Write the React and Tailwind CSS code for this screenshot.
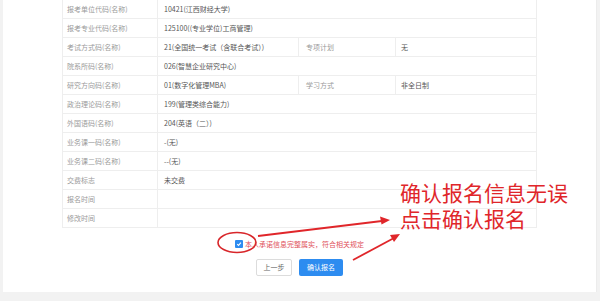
import React from 'react';

const rows = [
  { label: '报考单位代码(名称)', value: '10421(江西财经大学)' },
  { label: '报考专业代码(名称)', value: '125100((专业学位)工商管理)' },
  { label: '考试方式码(名称)', value: '21(全国统一考试（含联合考试）)', label2: '专项计划', value2: '无' },
  { label: '院系所码(名称)', value: '026(智慧企业研究中心)' },
  { label: '研究方向码(名称)', value: '01(数字化管理MBA)', label2: '学习方式', value2: '非全日制' },
  { label: '政治理论码(名称)', value: '199(管理类综合能力)' },
  { label: '外国语码(名称)', value: '204(英语（二）)' },
  { label: '业务课一码(名称)', value: '-(无)' },
  { label: '业务课二码(名称)', value: '--(无)' },
  { label: '交费标志', value: '未交费' },
  { label: '报名时间', value: '' },
  { label: '修改时间', value: '' },
];

const App = () => {
  return (
    <div
      className="relative w-[600px] h-[301px] overflow-hidden bg-[#f2f2f2] text-[7px]"
      style={{ fontFamily: '"Noto Sans CJK SC", "Noto Sans", sans-serif' }}
    >
      <div className="ml-[3px] w-[594px] h-[292px] bg-white border-r border-[#ececec] flex flex-col">
        {/* info table */}
        <div className="ml-[59px] w-[475px] border-l border-r border-[#eeeeee]">
          {rows.map((row, i) => (
            <div key={i} className="flex h-[19px] border-b border-[#eeeeee] items-center">
              <div className="w-[95px] h-full flex items-center pl-[4px] text-[#9a9a9a] border-r border-[#eeeeee]">
                {row.label}
              </div>
              {row.label2 ? (
                <>
                  <div className="w-[141px] h-full flex items-center pl-[6px] text-[#555] border-r border-[#eeeeee]">
                    {row.value}
                  </div>
                  <div className="w-[97px] h-full flex items-center pl-[7px] text-[#9a9a9a] border-r border-[#eeeeee]">
                    {row.label2}
                  </div>
                  <div className="flex-1 h-full flex items-center pl-[5px] text-[#555]">{row.value2}</div>
                </>
              ) : (
                <div className="flex-1 h-full flex items-center pl-[6px] text-[#555]">{row.value}</div>
              )}
            </div>
          ))}
        </div>

        {/* agreement */}
        <div className="ml-[59px] w-[475px] flex justify-center items-center mt-[11px] gap-[2px]">
          <span className="w-[8px] h-[8px] rounded-[1px] bg-[#2d8cf0] flex items-center justify-center">
            <svg width="6" height="6" viewBox="0 0 10 10">
              <path d="M2 5.2 L4.2 7.4 L8.2 2.8" stroke="white" strokeWidth="1.8" fill="none" />
            </svg>
          </span>
          <span className="text-[#e0505a]">本人承诺信息完整属实，符合相关规定</span>
        </div>

        {/* buttons */}
        <div className="ml-[59px] w-[475px] flex justify-center mt-[9px] gap-[7px]">
          <button className="w-[36px] h-[17px] border border-[#dcdcdc] rounded-[2px] bg-white text-[#666] text-[7px]">
            上一步
          </button>
          <button className="w-[44px] h-[17px] rounded-[2px] bg-[#2d8cf0] text-white text-[7px]">
            确认报名
          </button>
        </div>
      </div>

      {/* annotation */}
      <div className="absolute left-[400px] top-[179px] text-[21px] leading-[26px] text-[#e0262a]">
        <div>确认报名信息无误</div>
        <div>点击确认报名</div>
      </div>
      <svg className="absolute left-0 top-0" width="600" height="301" viewBox="0 0 600 301">
        <ellipse cx="237" cy="242.5" rx="19" ry="10" fill="none" stroke="#d8262a" strokeWidth="1.6" />
        <line x1="258" y1="236" x2="382" y2="221" stroke="#e0262a" strokeWidth="1.8" />
        <polygon points="390,220 380,216.5 381.5,224.5" fill="#e0262a" />
        <line x1="353" y1="260" x2="394" y2="238" stroke="#e0262a" strokeWidth="1.8" />
        <polygon points="400,234 390,235 394,242" fill="#e0262a" />
      </svg>
    </div>
  );
};

export default App;
